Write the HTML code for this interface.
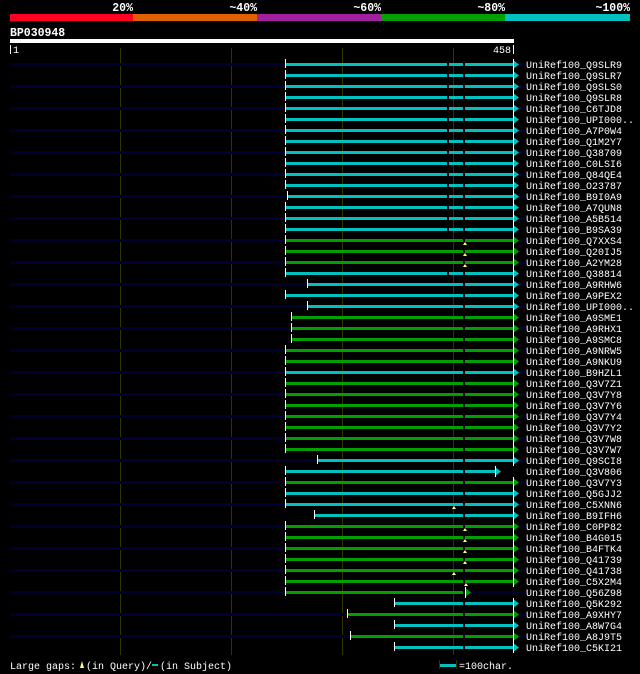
<!DOCTYPE html>
<html><head><meta charset="utf-8"><style>
html,body{margin:0;padding:0;background:#000;width:640px;height:674px;overflow:hidden}
svg{display:block}
text{font-family:"Liberation Mono","DejaVu Sans Mono",monospace;fill:#fff}
.l{font-size:10px}
.h{font-size:11.5px;font-weight:bold}
</style></head><body>
<svg id="s" width="640" height="674" viewBox="0 0 640 674">
<rect x="10" y="14" width="123" height="7" fill="#ff0022"/>
<rect x="133" y="14" width="124" height="7" fill="#e06000"/>
<rect x="257" y="14" width="124" height="7" fill="#a020a0"/>
<rect x="381" y="14" width="124" height="7" fill="#00a000"/>
<rect x="505" y="14" width="125" height="7" fill="#00c0c0"/>
<text class="h" x="133" y="11" text-anchor="end">20%</text>
<text class="h" x="257" y="11" text-anchor="end">~40%</text>
<text class="h" x="381" y="11" text-anchor="end">~60%</text>
<text class="h" x="505" y="11" text-anchor="end">~80%</text>
<text class="h" x="630" y="11" text-anchor="end">~100%</text>
<text class="h" x="10" y="36">BP030948</text>
<rect x="10" y="39" width="504" height="4" fill="#fff"/>
<rect x="10" y="45" width="1" height="9" fill="#fff"/>
<text class="l" x="13" y="53">1</text>
<text class="l" x="511" y="53" text-anchor="end">458</text>
<rect x="513" y="45" width="1" height="9" fill="#fff"/>
<g id="g"></g>
<g class="l">
<text class="l" x="526" y="68">UniRef100_Q9SLR9</text>
<text class="l" x="526" y="79">UniRef100_Q9SLR7</text>
<text class="l" x="526" y="90">UniRef100_Q9SLS0</text>
<text class="l" x="526" y="101">UniRef100_Q9SLR8</text>
<text class="l" x="526" y="112">UniRef100_C6TJD8</text>
<text class="l" x="526" y="123">UniRef100_UPI000..</text>
<text class="l" x="526" y="134">UniRef100_A7P0W4</text>
<text class="l" x="526" y="145">UniRef100_Q1M2Y7</text>
<text class="l" x="526" y="156">UniRef100_Q38709</text>
<text class="l" x="526" y="167">UniRef100_C0LSI6</text>
<text class="l" x="526" y="178">UniRef100_Q84QE4</text>
<text class="l" x="526" y="189">UniRef100_O23787</text>
<text class="l" x="526" y="200">UniRef100_B9I0A9</text>
<text class="l" x="526" y="211">UniRef100_A7QUN8</text>
<text class="l" x="526" y="222">UniRef100_A5B514</text>
<text class="l" x="526" y="233">UniRef100_B9SA39</text>
<text class="l" x="526" y="244">UniRef100_Q7XXS4</text>
<text class="l" x="526" y="255">UniRef100_Q20IJ5</text>
<text class="l" x="526" y="266">UniRef100_A2YM28</text>
<text class="l" x="526" y="277">UniRef100_Q38814</text>
<text class="l" x="526" y="288">UniRef100_A9RHW6</text>
<text class="l" x="526" y="299">UniRef100_A9PEX2</text>
<text class="l" x="526" y="310">UniRef100_UPI000..</text>
<text class="l" x="526" y="321">UniRef100_A9SME1</text>
<text class="l" x="526" y="332">UniRef100_A9RHX1</text>
<text class="l" x="526" y="343">UniRef100_A9SMC8</text>
<text class="l" x="526" y="354">UniRef100_A9NRW5</text>
<text class="l" x="526" y="365">UniRef100_A9NKU9</text>
<text class="l" x="526" y="376">UniRef100_B9HZL1</text>
<text class="l" x="526" y="387">UniRef100_Q3V7Z1</text>
<text class="l" x="526" y="398">UniRef100_Q3V7Y8</text>
<text class="l" x="526" y="409">UniRef100_Q3V7Y6</text>
<text class="l" x="526" y="420">UniRef100_Q3V7Y4</text>
<text class="l" x="526" y="431">UniRef100_Q3V7Y2</text>
<text class="l" x="526" y="442">UniRef100_Q3V7W8</text>
<text class="l" x="526" y="453">UniRef100_Q3V7W7</text>
<text class="l" x="526" y="464">UniRef100_Q9SCI8</text>
<text class="l" x="526" y="475">UniRef100_Q3V806</text>
<text class="l" x="526" y="486">UniRef100_Q3V7Y3</text>
<text class="l" x="526" y="497">UniRef100_Q5GJJ2</text>
<text class="l" x="526" y="508">UniRef100_C5XNN6</text>
<text class="l" x="526" y="519">UniRef100_B9IFH6</text>
<text class="l" x="526" y="530">UniRef100_C0PP82</text>
<text class="l" x="526" y="541">UniRef100_B4G015</text>
<text class="l" x="526" y="552">UniRef100_B4FTK4</text>
<text class="l" x="526" y="563">UniRef100_Q41739</text>
<text class="l" x="526" y="574">UniRef100_Q41738</text>
<text class="l" x="526" y="585">UniRef100_C5X2M4</text>
<text class="l" x="526" y="596">UniRef100_Q56Z98</text>
<text class="l" x="526" y="607">UniRef100_Q5K292</text>
<text class="l" x="526" y="618">UniRef100_A9XHY7</text>
<text class="l" x="526" y="629">UniRef100_A8W7G4</text>
<text class="l" x="526" y="640">UniRef100_A8J9T5</text>
<text class="l" x="526" y="651">UniRef100_C5KI21</text>
</g>
<text class="l" x="10" y="669">Large gaps:</text>
<path d="M80 668 L82 661 L84 668Z" fill="#ffff80"/>
<text class="l" x="86" y="669">(in Query)/</text>
<rect x="152" y="664" width="6" height="2" fill="#00c0c0"/>
<text class="l" x="160" y="669">(in Subject)</text>
<rect x="439" y="660" width="1" height="9" fill="#333300"/>
<rect x="456" y="660" width="1" height="9" fill="#333300"/>
<rect x="440" y="664" width="16" height="3" fill="#00c0c0"/>
<text class="l" x="459" y="669">=100char.</text>
</svg>
<script>
var C="#00c0c0",G="#00a000";
var rows="cccccccccccccccc ggg cccc ggggg c ggggggg c c g c c c ggggggg c g c g c".replace(/ /g,"");
var st={12:287,20:307,22:307,23:291,24:291,25:291,36:317,41:314,49:394,50:347,51:394,52:350,53:394};
var en={37:495,48:465};
var h="";
for(var x of [120,231,342,453])h+='<rect x="'+x+'" y="48" width="1" height="607" fill="#333300"/>';
for(var i=0;i<54;i++){
 var y=64+11*i,col=rows[i]=="g"?G:C,s=st[i]||285,e=en[i]||513;
 if(i%2==0)h+='<rect x="10" y="'+(y-1)+'" width="516" height="3" fill="#000030"/>';
 h+='<rect x="'+s+'" y="'+(y-1)+'" width="'+(e-s)+'" height="3" fill="'+col+'"/>';
 h+='<rect x="'+(s)+'" y="'+(y-5)+'" width="1" height="9" fill="#fff"/>';
 h+='<rect x="463" y="'+(y-1)+'" width="2" height="3" fill="#000"/>';
 if(col==C&&i<20)h+='<rect x="447" y="'+(y-1)+'" width="2" height="3" fill="#000"/>';
 h+='<path d="M'+e+' '+(y-4)+' L'+(e+6)+' '+(y+0.5)+' L'+e+' '+(y+5)+'Z" fill="'+col+'"/>';
 h+='<rect x="'+e+'" y="'+(y-5)+'" width="1" height="11" fill="#fff"/>';
}
var mk={17:465,18:465,19:465,41:454,43:465,44:465,45:465,46:465,47:454,48:466};
for(var i in mk)h+='<path d="M'+(mk[i]-2)+' '+(64+11*i-6)+' l2 -3 l2 3z" fill="#ffff80"/>';
document.getElementById("g").innerHTML=h;
</script>
</body></html>
